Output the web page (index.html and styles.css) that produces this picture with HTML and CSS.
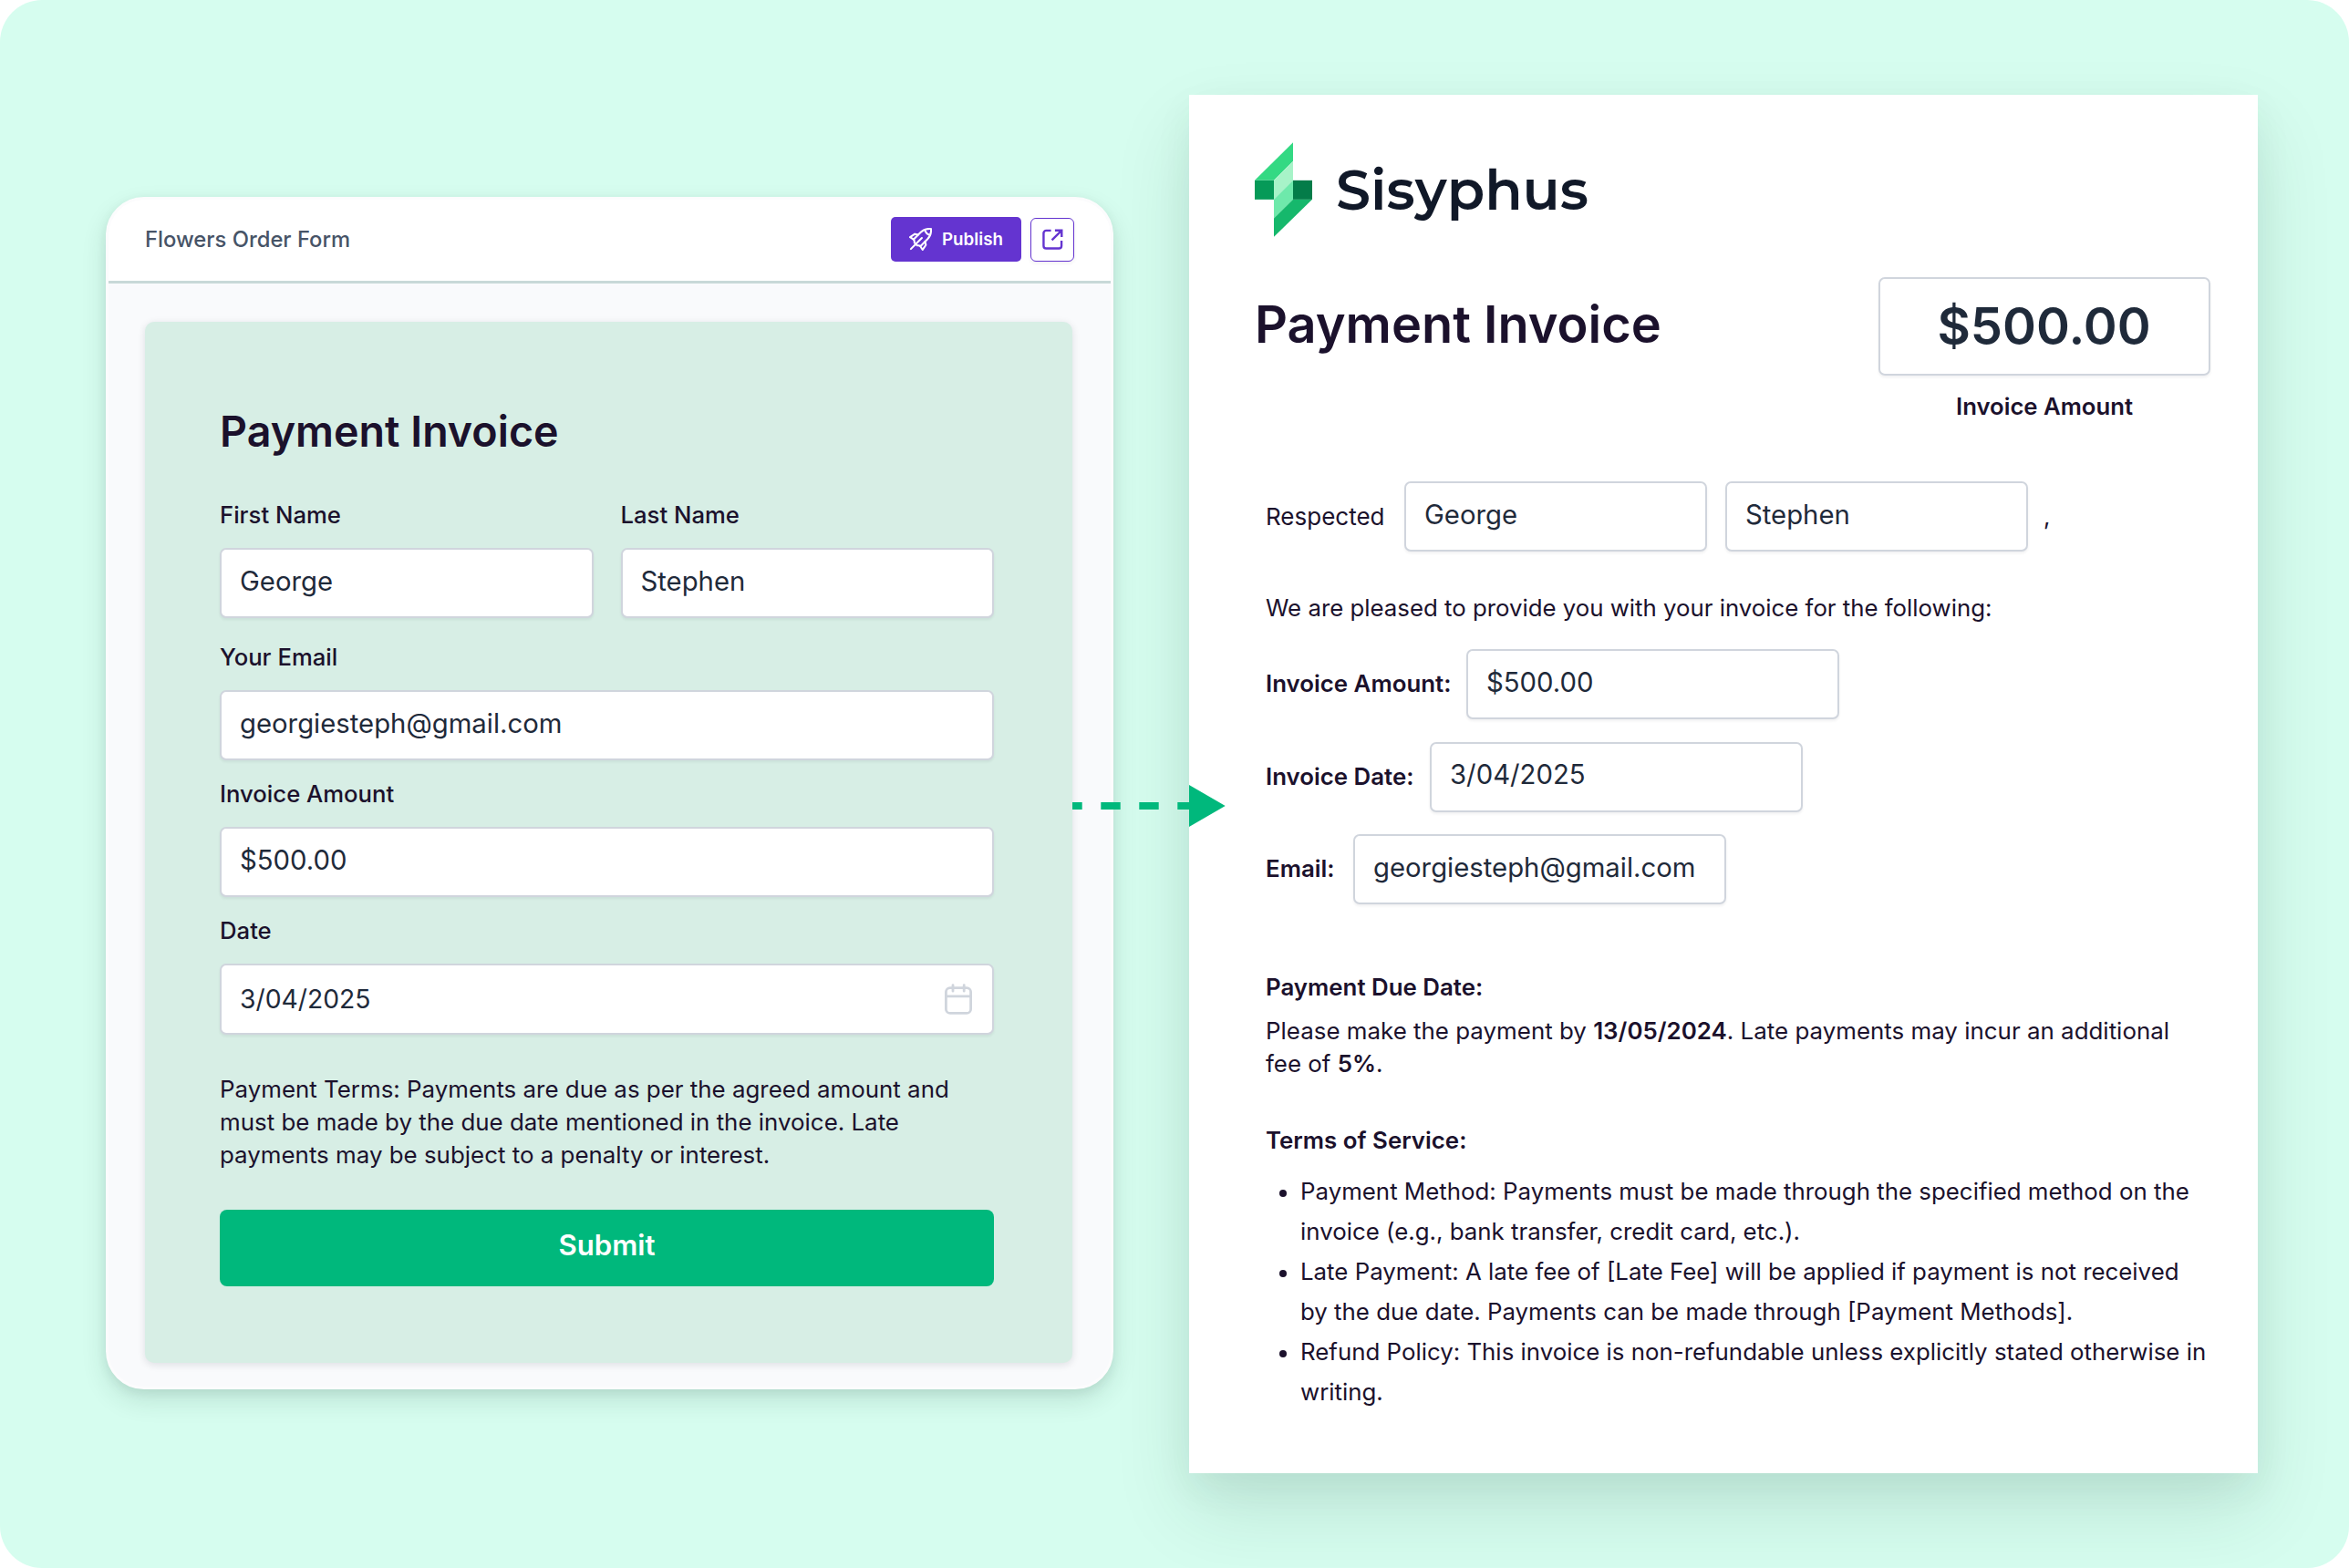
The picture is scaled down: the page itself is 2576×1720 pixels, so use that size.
FILE: index.html
```html
<!DOCTYPE html>
<html lang="en">
<head>
<meta charset="utf-8">
<title>Payment Invoice</title>
<link rel="stylesheet" href="styles.css">
</head>
<body>
<main class="stage">
  <section class="card">
    <header class="card-header">
      <span class="card-title">Flowers Order Form</span>
      <div class="actions">
        <button class="publish">
          <svg class="rocket" viewBox="0 0 24 24" fill="none" stroke="currentColor" stroke-width="2" stroke-linecap="round" stroke-linejoin="round">
            <path d="M23 1C18.500.6 15 1.800 12.200 4.600L4.600 12.200C6 13.200 5.400 14.600 5.600 15.600L8.400 18.400C9.400 18.600 10.800 18 11.800 19.400L19.400 11.800C22.200 9 23.400 5.500 23 1Z"/>
            <path d="M16.600 2.400C17.400 5.200 18.800 6.600 21.600 7.400"/>
            <path d="M9.600 7.200L6 6.400L1 9.800L4.600 12.200"/>
            <path d="M16.800 14.400L17.600 18L14.200 23L11.800 19.400"/>
            <path d="M1.800 22.200L13.400 10.600"/>
          </svg>
          <span>Publish</span>
        </button>
        <button class="open">
          <svg class="external" viewBox="0 0 24 24" fill="none" stroke="currentColor" stroke-width="2.500" stroke-linejoin="round">
            <path d="M10 2H4.500A3 3 0 0 0 1.500 5V19.500A3 3 0 0 0 4.500 22.500H19A3 3 0 0 0 22 19.500V13.500"/>
            <path d="M11 13L22 2M14.500 1.800H22.200V9.500" stroke-linejoin="miter"/>
          </svg>
        </button>
      </div>
    </header>
    <form class="panel">
      <h2 class="form-title">Payment Invoice</h2>
      <div class="names">
        <div class="field"><label>First Name</label><div class="input">George</div></div>
        <div class="field"><label>Last Name</label><div class="input">Stephen</div></div>
      </div>
      <div class="field"><label>Your Email</label><div class="input">georgiesteph@gmail.com</div></div>
      <div class="field"><label>Invoice Amount</label><div class="input">$500.00</div></div>
      <div class="field">
        <label>Date</label>
        <div class="input date">
          <span>3/04/2025</span>
          <svg class="calendar" viewBox="0 0 30 34" fill="none" stroke="currentColor" stroke-width="2.800" stroke-linecap="round">
            <rect x="1.400" y="4.600" width="27.200" height="27.800" rx="4.500"/>
            <path d="M1.400 13.800H28.600M9 1.600V8.200M21.200 1.600V8.200"/>
          </svg>
        </div>
      </div>
      <p class="form-terms">Payment Terms: Payments are due as per the agreed amount and<br>must be made by the due date mentioned in the invoice. Late<br>payments may be subject to a penalty or interest.</p>
      <button class="submit">Submit</button>
    </form>
  </section>

  <article class="paper">
    <div class="brand">
      <svg class="brand-mark" viewBox="0 0 189 311">
        <path fill="#33d983" d="M0 125L126 0V62L63 125Z"/>
        <path fill="#a7f3c8" d="M63 125L126 62V125L63 188Z"/>
        <path fill="#6ee9ab" d="M63 188L126 125V188L63 250Z"/>
        <path fill="#16b86c" d="M63 250L126 188H189L63 311Z"/>
        <path fill="#069a58" d="M0 125H63V188H0Z"/>
        <path fill="#047c49" d="M126 125H189V188H126Z"/>
      </svg>
      <span class="brand-name">Sisyphus</span>
    </div>
    <div class="headline">
      <h1>Payment Invoice</h1>
      <div class="total">
        <div class="total-box">$500.00</div>
        <div class="total-caption">Invoice Amount</div>
      </div>
    </div>
    <div class="letter">
      <div class="row greeting">
        <span class="respected">Respected</span>
        <div class="input">George</div>
        <div class="input">Stephen</div>
        <span class="comma">,</span>
      </div>
      <p class="intro">We are pleased to provide you with your invoice for the following:</p>
      <div class="details">
        <div class="row"><b class="l-amount">Invoice Amount:</b><div class="input">$500.00</div></div>
        <div class="row"><b class="l-date">Invoice Date:</b><div class="input">3/04/2025</div></div>
        <div class="row"><b class="l-email">Email:</b><div class="input">georgiesteph@gmail.com</div></div>
      </div>
      <h3 class="due-title">Payment Due Date:</h3>
      <p class="due">Please make the payment by <b>13/05/2024</b>. Late payments may incur an additional<br>fee of <b>5%</b>.</p>
      <h3 class="tos-title">Terms of Service:</h3>
      <ul class="tos">
        <li>Payment Method: Payments must be made through the specified method on the<br>invoice (e.g., bank transfer, credit card, etc.).</li>
        <li>Late Payment: A late fee of [Late Fee] will be applied if payment is not received<br>by the due date. Payments can be made through [Payment Methods].</li>
        <li>Refund Policy: This invoice is non-refundable unless explicitly stated otherwise in<br>writing.</li>
      </ul>
    </div>
  </article>

  <svg class="arrow" viewBox="0 0 168 46" fill="#00b87c">
    <path d="M0 19H10.700V27H0ZM31.300 19H52.700V27H31.300ZM73.300 19H94.700V27H73.300ZM115.300 19H128V27H115.300ZM128 0L167.700 23L128 46Z"/>
  </svg>
</main>
</body>
</html>
```
FILE: styles.css
```css
* { box-sizing: border-box; margin: 0; padding: 0; }

body {
  width: 2576px;
  height: 1720px;
  overflow: hidden;
  background: #fff;
  font-family: Inter, "Liberation Sans", sans-serif;
  color: #1b112c;
}

button { border: 0; font-family: inherit; }

.stage {
  position: relative;
  display: flex;
  align-items: flex-start;
  gap: 83px;
  width: 2576px;
  height: 1720px;
  padding: 104px 0 0 116px;
  border-radius: 46px;
  overflow: hidden;
  background: #d6fdef;
}

/* Form card */
.card {
  flex: none;
  width: 1105px;
  height: 1308px;
  margin-top: 112px;
  border: 3px solid #fcfcfd;
  border-radius: 42px;
  background: #f9fafc;
  box-shadow: 0 12px 28px rgba(16, 50, 40, .12), 0 4px 12px rgba(16, 50, 40, .08);
}

.card-header {
  display: flex;
  align-items: center;
  justify-content: space-between;
  height: 92px;
  padding: 0 40px 2px 39px;
  border-bottom: 3px solid #c8d9d8;
  border-radius: 39px 39px 0 0;
  background: #fff;
}

.card-title { padding-left: 1px; font-size: 23.800px; font-weight: 450; line-height: 30px; color: #475467; }

.actions { display: flex; align-items: center; gap: 10px; }

.publish {
  display: flex;
  align-items: center;
  gap: 11px;
  width: 143px;
  height: 49px;
  padding-left: 20px;
  border-radius: 5px;
  background: #6434d0;
  color: #fff;
  font-size: 18.800px;
  font-weight: 600;
}

.rocket { width: 25px; height: 25px; }

.open {
  display: grid;
  place-items: center;
  width: 48px;
  height: 48px;
  border: 1.500px solid #6434d0;
  border-radius: 6px;
  background: #fff;
  color: #6434d0;
  box-shadow: 0 2px 4px rgba(16, 24, 40, .06);
}

.external { width: 23px; height: 23px; }

.panel {
  display: flex;
  flex-direction: column;
  width: 1017px;
  height: 1142px;
  margin: 42px 0 0 40px;
  padding: 92px 86px 0 82px;
  border-radius: 10px;
  background: #d7eee5;
  box-shadow: 0 2px 8px rgba(16, 24, 40, .12);
}

.form-title { margin-bottom: 48px; font-size: 46.600px; font-weight: 600; line-height: 56px; }

.names { display: flex; gap: 30px; margin-bottom: 27px; }
.names .field { flex: 1; margin: 0; }

.field { display: flex; flex-direction: column; gap: 20px; margin-bottom: 21px; }
.field label { font-size: 25.700px; font-weight: 500; line-height: 32px; }

.input {
  display: flex;
  align-items: center;
  height: 77px;
  padding: 0 18px 5px 20px;
  border: 2px solid #d0d5dd;
  border-radius: 7px;
  background: #fff;
  box-shadow: 0 2px 3px rgba(16, 24, 40, .06);
  color: #1f2a3a;
  font-size: 29.300px;
}

.date { justify-content: space-between; height: 78px; padding: 0 22px 0 20px; font-size: 28.300px; }
.calendar { width: 30px; height: 34px; color: #d0d5dd; }

.form-terms { margin-top: 21px; font-size: 25.900px; line-height: 36.100px; }

.submit {
  height: 84px;
  margin-top: 42px;
  padding-bottom: 6px;
  border-radius: 8px;
  background: #00b87c;
  color: #fff;
  font-size: 31.200px;
  font-weight: 600;
}

/* Invoice document */
.paper {
  flex: none;
  width: 1172px;
  height: 1512px;
  padding: 52px 52px 0 72px;
  background: #fff;
  box-shadow: 0 40px 80px rgba(16, 60, 45, .12), 0 16px 40px rgba(16, 60, 45, .06);
}

.brand { display: flex; align-items: center; gap: 26px; height: 104px; }
.brand-mark { width: 63px; height: 104px; }
.brand-name { color: #101828; font-family: Montserrat, Inter, sans-serif; font-size: 60.500px; font-weight: 600; }

.headline { display: flex; justify-content: space-between; margin-top: 44px; }
.headline h1 { font-size: 55.900px; font-weight: 600; line-height: 103px; }

.total { width: 364px; text-align: center; }
.total-box {
  height: 108px;
  padding-right: 1px;
  border: 2px solid #d0d5dd;
  border-radius: 7px;
  box-shadow: 0 2px 3px rgba(16, 24, 40, .06);
  color: #1f2a3a;
  font-size: 56px;
  font-weight: 600;
  line-height: 105px;
}
.total-caption { margin-top: 17px; font-size: 25.700px; font-weight: 600; line-height: 33px; }

.letter { margin: 66px -40px 0 12px; font-size: 25.850px; }
.letter b, .letter h3 { font-weight: 600; }
.letter h3 { font-size: 25.850px; line-height: 36px; }

.row { display: flex; align-items: center; height: 77px; }
.row b { padding-bottom: 2px; }

.greeting .input { width: 332px; margin-right: 20px; }
.respected { width: 152px; font-size: 26px; }
.comma { margin-left: -3px; }

.intro { margin: 44px 0 27px; font-size: 25.800px; line-height: 36px; }

.details { display: flex; flex-direction: column; gap: 24.500px; }
.details .input { width: 409px; }
.l-amount { width: 220px; }
.l-date { width: 180px; }
.l-email { width: 96px; }

.due-title { margin: 73px 0 12px; }
.due { font-size: 25.920px; line-height: 36px; }
.tos-title { margin-top: 48px; }

.tos { margin-top: 16px; list-style: none; line-height: 44.060px; }
.tos li { position: relative; padding-left: 38px; }
.tos li::before {
  content: "";
  position: absolute;
  left: 15px;
  top: 20px;
  width: 8px;
  height: 8px;
  border-radius: 50%;
  background: #1b112c;
}

/* Connector from form to document */
.arrow { position: absolute; left: 1176px; top: 861px; width: 168px; height: 46px; }
```
